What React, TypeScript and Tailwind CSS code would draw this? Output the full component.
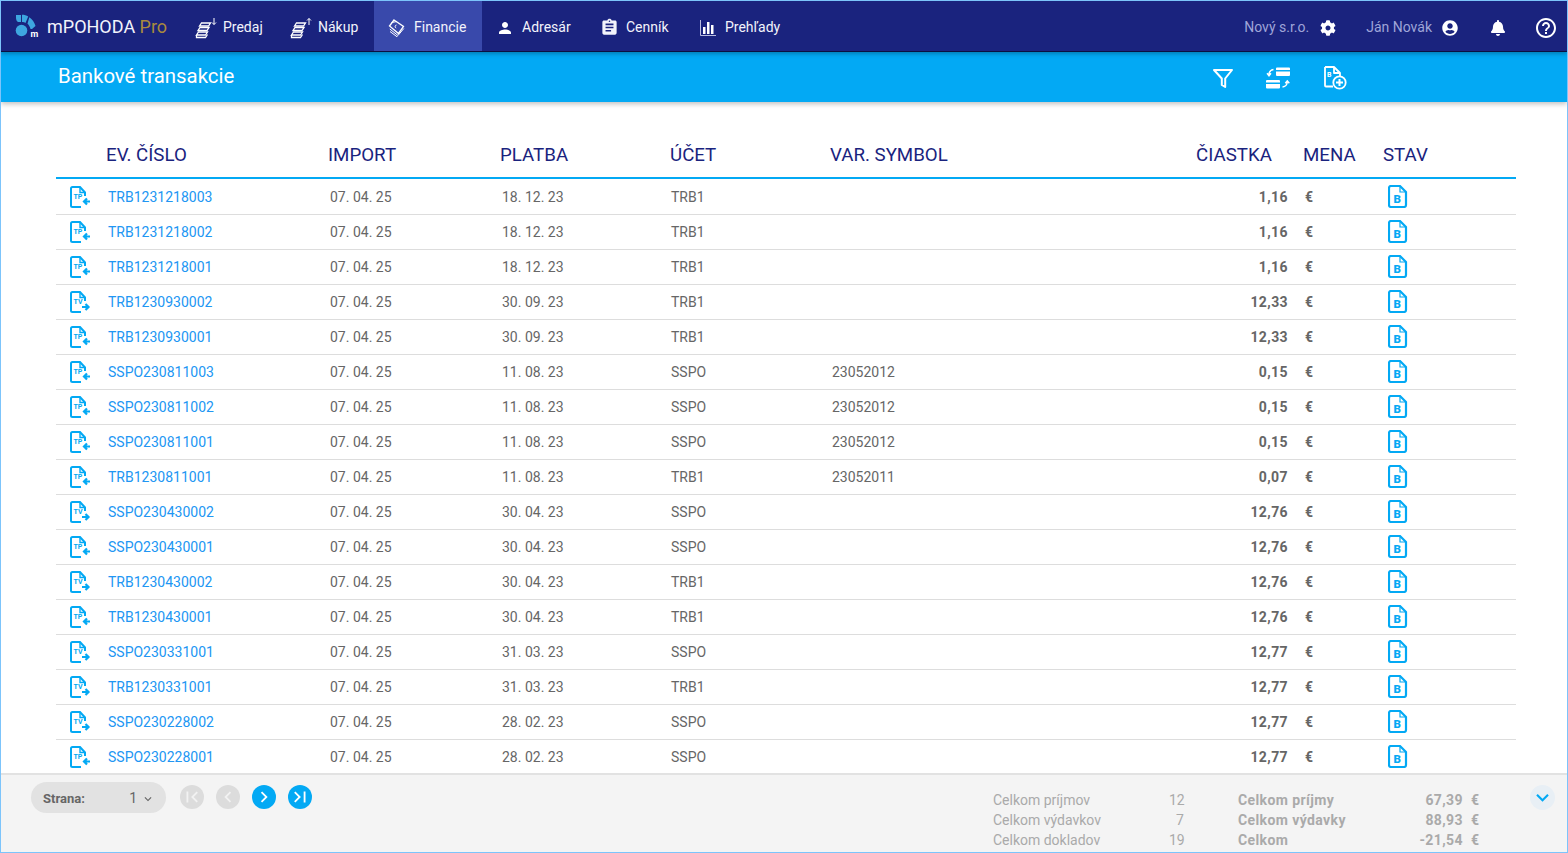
import React from "react";
import { FaCog, FaUserCircle, FaBell } from "react-icons/fa";
import { MdPerson, MdAssignment, MdHelpOutline, MdKeyboardArrowDown, MdChevronRight, MdChevronLeft, MdFirstPage, MdLastPage } from "react-icons/md";

type Row = [string, string, string, string, string, string];
const rows: Row[] = [
  ["TP", "TRB1231218003", "18. 12. 23", "TRB1", "", "1,16"],
  ["TP", "TRB1231218002", "18. 12. 23", "TRB1", "", "1,16"],
  ["TP", "TRB1231218001", "18. 12. 23", "TRB1", "", "1,16"],
  ["TV", "TRB1230930002", "30. 09. 23", "TRB1", "", "12,33"],
  ["TP", "TRB1230930001", "30. 09. 23", "TRB1", "", "12,33"],
  ["TP", "SSPO230811003", "11. 08. 23", "SSPO", "23052012", "0,15"],
  ["TP", "SSPO230811002", "11. 08. 23", "SSPO", "23052012", "0,15"],
  ["TP", "SSPO230811001", "11. 08. 23", "SSPO", "23052012", "0,15"],
  ["TP", "TRB1230811001", "11. 08. 23", "TRB1", "23052011", "0,07"],
  ["TV", "SSPO230430002", "30. 04. 23", "SSPO", "", "12,76"],
  ["TP", "SSPO230430001", "30. 04. 23", "SSPO", "", "12,76"],
  ["TV", "TRB1230430002", "30. 04. 23", "TRB1", "", "12,76"],
  ["TP", "TRB1230430001", "30. 04. 23", "TRB1", "", "12,76"],
  ["TV", "SSPO230331001", "31. 03. 23", "SSPO", "", "12,77"],
  ["TV", "TRB1230331001", "31. 03. 23", "TRB1", "", "12,77"],
  ["TV", "SSPO230228002", "28. 02. 23", "SSPO", "", "12,77"],
  ["TP", "SSPO230228001", "28. 02. 23", "SSPO", "", "12,77"],
];

const Logo = () => (
  <svg width="25" height="24" viewBox="0 0 25 24" className="shrink-0">
    <circle cx="6.500" cy="16.500" r="5.800" fill="#3ea6e0" />
    <path d="M1 1h5v7H3C1.500 7 1 5.500 1 4z" fill="#3ea6e0" />
    <path d="M7 .8c2.500 0 4.500.6 6.200 1.700L10.500 9C9.500 8.300 8.500 8 7 8z" fill="#3ea6e0" />
    <path d="M14.300 3.200c3 2 5.300 5.200 6.200 8.700l-3.500 3.100h-1.500c-.5-2-1.500-3.800-3-5.200z" fill="#3ea6e0" />
    <text x="15.500" y="22.500" fontSize="9" fontWeight="700" fill="#fff" fontFamily="Roboto, sans-serif">m</text>
  </svg>
);

const Coins = ({ up }: { up?: boolean }) => (
  <svg width="22" height="22" viewBox="0 0 22 22" fill="none" stroke="#fff" strokeWidth="1.300" className="shrink-0">
    <path d="M4.500 9 6.500 6h9l-2 3z" />
    <path d="M3 13.500 5 10.500h9l-2 3z" />
    <path d="M1.500 18 3.500 15h9l-2 3z" />
    <path d="M1.500 18v2.500h9l2-3" />
    {up ? <path d="M19 8V1.500M17 3.500l2-2 2 2" strokeWidth="1" /> : <path d="M19 1v6.500M17 5.500l2 2 2-2" strokeWidth="1" />}
  </svg>
);

const Bank = () => (
  <svg width="18" height="18" viewBox="0 0 18 18" fill="none" stroke="#fff" strokeWidth="1.300" className="shrink-0">
    <path d="M6 1 15.500 7.500 10.500 14.500 1.500 7z" />
    <path d="M3.500 3.500 9 2.500M8.500 6c-1.500 0-2 2.500-.300 3" strokeWidth="1" />
    <path d="M1.800 10 10 16.500l5.800-7M2 12.500l8 6" strokeWidth="1" />
  </svg>
);

const Bars = () => (
  <svg width="16" height="16" viewBox="0 0 16 16" className="shrink-0">
    <path d="M.5 0v15.500H16" fill="none" stroke="#b9bde0" strokeWidth="1" />
    <rect x="3" y="7" width="2.500" height="7" fill="#fff" />
    <rect x="7" y="2" width="2.500" height="12" fill="#fff" />
    <rect x="11" y="5" width="2.500" height="9" fill="#fff" />
  </svg>
);

const NavItem = ({ icon, label, active, cls, iconCls }: { icon: React.ReactNode; label: string; active?: boolean; cls: string; iconCls: string }) => (
  <div className={`flex h-full items-center pl-[14px] pt-[3px] ${cls} ${active ? "bg-[#3949ab]" : ""}`}>
    <div className={`flex items-center ${iconCls}`}>{icon}</div>
    <span className="text-[14px] text-[#f2f3fb]">{label}</span>
  </div>
);

const Funnel = () => (
  <svg width="22" height="22" viewBox="0 0 22 22" fill="none" stroke="#fff" strokeWidth="2" strokeLinejoin="round">
    <path d="M2 3h18l-6.800 8.500v8.500l-3.400-2v-6.500z" />
  </svg>
);

const Transfer = () => (
  <svg width="26" height="24" viewBox="0 0 26 24" fill="#fff">
    <path d="M11 2.500a1 1 0 0 1 1-1h12a1 1 0 0 1 1 1v1.500H11zM11 5.500h14V9a1 1 0 0 1-1 1H12a1 1 0 0 1-1-1z" />
    <path d="M1 15a1 1 0 0 1 1-1h12a1 1 0 0 1 1 1v1.500H1zM1 18h14v3.500a1 1 0 0 1-1 1H2a1 1 0 0 1-1-1z" />
    <path d="M8.500 3.500C5.500 4 3.800 6 4 9M2 7.300 4 9.800l2-2.500M17.500 21c3 -.3 4.700-2 4.800-5.500M20.300 17.300l2-2.500 2 2.500" fill="none" stroke="#fff" strokeWidth="1.400" />
  </svg>
);

const DocPlus = () => (
  <svg width="24" height="24" viewBox="0 0 24 24" fill="none">
    <path d="M2 1h9l6 6v5M10 20.500H3a1 1 0 0 1-1-1V1M11 1v6h6" stroke="#fff" strokeWidth="1.800" strokeLinejoin="round" />
    <text x="4" y="11" fontSize="7" fontWeight="700" fill="#fff" fontFamily="Roboto, sans-serif">B</text>
    <circle cx="16.500" cy="16.500" r="6.200" stroke="#fff" strokeWidth="1.800" fill="#03a9f4" />
    <path d="M16.500 13v7M13 16.500h7" stroke="#fff" strokeWidth="2" />
  </svg>
);

const DocType = ({ type }: { type: string }) => (
  <svg width="22" height="22" viewBox="0 0 22 22" fill="none" className="shrink-0">
    <path d="M15 10V6.500L10 1H2.500a1.500 1.500 0 0 0-1.500 1.500v17A1.500 1.500 0 0 0 2.500 21H11" stroke="#03a9f4" strokeWidth="2" />
    <path d="M10 1.500V6.500h5" stroke="#03a9f4" strokeWidth="1.400" />
    <text x="3.500" y="12.500" fontSize="7" fontWeight="700" fill="#03a9f4" fontFamily="Roboto, sans-serif">{type}</text>
    {type === "TP" ? (
      <path d="M20 15.500h-6M17 12.500l-3 3 3 3" stroke="#03a9f4" strokeWidth="2.200" />
    ) : (
      <path d="M12 16h6M15.500 13l3 3-3 3" stroke="#03a9f4" strokeWidth="2.200" />
    )}
  </svg>
);

const DocB = () => (
  <svg width="20" height="23" viewBox="0 0 20 23" fill="none" className="mb-[2px] shrink-0">
    <path d="M12 1H3a2 2 0 0 0-2 2v17a2 2 0 0 0 2 2h13a2 2 0 0 0 2-2V7z" stroke="#03a9f4" strokeWidth="2.200" strokeLinejoin="round" />
    <path d="M12 1.500V7h5.500" stroke="#03a9f4" strokeWidth="1.200" />
    <text x="5.500" y="18" fontSize="11.500" fontWeight="900" fill="#03a9f4" fontFamily="Roboto, sans-serif">B</text>
  </svg>
);

const grid = "grid grid-cols-[50px_222px_172px_170px_160px_366px_107px_80px_1fr] items-center";

const PageBtn = ({ children, on }: { children: React.ReactNode; on?: boolean }) => (
  <div className={`flex h-6 w-6 items-center justify-center rounded-full ${on ? "bg-[#03a9f4] text-white" : "bg-[#dcdcdc] text-[#f2f2f2]"}`}>
    {children}
  </div>
);

const Total = ({ a, n, b, v }: { a: string; n: string; b: string; v: string }) => (
  <div className="flex h-5 items-center text-[14px] text-[#aaaaaa]">
    <span className="w-[176px]">{a}</span>
    <span className="w-[15px] text-right">{n}</span>
    <span className="ml-[54px] w-[121px] font-bold tracking-[0.4px]">{b}</span>
    <span className="w-[104px] text-right font-bold tracking-[0.4px]">{v}</span>
    <span className="ml-[8px] font-bold">€</span>
  </div>
);

export default function App() {
  return (
    <div className="flex h-screen w-full flex-col overflow-hidden border border-[#7cc4fb] bg-white font-['Roboto',sans-serif]">
      <header className="z-20 flex h-[51px] shrink-0 items-center border-b border-[#0b1040] bg-[#1a237e] shadow-[0_2px_4px_rgba(0,0,0,0.25)]">
        <div className="flex w-[180px] items-center gap-[7px] pl-[14px]">
          <Logo />
          <span className="whitespace-nowrap text-[18px] text-[#f2f3fb]">mPOHODA <span className="text-[#a98a3d]">Pro</span></span>
        </div>
        <div className="flex h-full items-center">
          <NavItem cls="w-[95px]" iconCls="w-[28px]" icon={<Coins />} label="Predaj" />
          <NavItem cls="w-[98px]" iconCls="w-[28px]" icon={<Coins up />} label="Nákup" />
          <NavItem cls="w-[108px]" iconCls="w-[26px]" active icon={<Bank />} label="Financie" />
          <NavItem cls="w-[104px]" iconCls="w-[26px]" icon={<MdPerson size={18} color="#fff" />} label="Adresár" />
          <NavItem cls="w-[100px]" iconCls="w-[26px]" icon={<MdAssignment size={19} color="#f2f3fb" />} label="Cenník" />
          <NavItem cls="" iconCls="w-[25px]" icon={<Bars />} label="Prehľady" />
        </div>
        <div className="ml-auto flex items-center pt-[3px] text-[14px] text-[#9fa5d8]">
          <span>Nový s.r.o.</span>
          <FaCog size={16} color="#fff" className="ml-[11px]" />
          <span className="ml-[30px]">Ján Novák</span>
          <FaUserCircle size={16} color="#fff" className="ml-[10px]" />
          <FaBell size={16} color="#fff" className="ml-[32px]" />
          <MdHelpOutline size={24} color="#fff" className="ml-[28px] mr-[9px]" />
        </div>
      </header>
      <div className="z-10 flex h-[50px] shrink-0 items-center bg-[#03a9f4] pl-[57px] shadow-[0_2px_5px_rgba(0,0,0,0.25)]">
        <h1 className="mb-[2px] text-[20.4px] font-normal text-white">Bankové transakcie</h1>
        <div className="ml-auto mr-[220px] mt-[1px] flex items-center">
          <Funnel />
          <div className="ml-[31px]"><Transfer /></div>
          <div className="ml-[32px]"><DocPlus /></div>
        </div>
      </div>
      <main className="min-h-0 flex-1 overflow-hidden pl-[55px] pr-[51px] pt-[29px]">
        <div className={`${grid} mb-[1px] h-[48px] border-b-2 border-[#03a9f4] pt-[3px] text-[18.72px] text-[#1a237e]`}>
          <span />
          <span>EV. ČÍSLO</span>
          <span>IMPORT</span>
          <span>PLATBA</span>
          <span>ÚČET</span>
          <span>VAR. SYMBOL</span>
          <span>ČIASTKA</span>
          <span>MENA</span>
          <span>STAV</span>
        </div>
        {rows.map((r) => (
          <div key={r[1]} className={`${grid} h-[35px] border-b border-[#dddddd] text-[14px] text-[#666666]`}>
            <div className="pl-[14px]"><DocType type={r[0]} /></div>
            <span className="pl-[2px] text-[#2196f3]">{r[1]}</span>
            <span className="pl-[2px]">07. 04. 25</span>
            <span className="pl-[2px]">{r[2]}</span>
            <span className="pl-[1px]">{r[3]}</span>
            <span className="pl-[2px]">{r[4]}</span>
            <span className="pr-[15px] text-right font-bold tracking-[0.4px]">{r[5]}</span>
            <span className="pl-[2px] font-bold">€</span>
            <div className="pl-[5px]"><DocB /></div>
          </div>
        ))}
      </main>
      <footer className="z-10 flex h-[79px] shrink-0 border-t-2 border-[#e2e2e2] bg-[#f4f4f4]">
        <div className="ml-[30px] mt-[7px] flex items-start">
          <div className="flex h-[31px] w-[135px] items-center rounded-full bg-[#e2e2e2] pl-3 pr-[11px] pt-[2px] text-[13px] text-[#666666]">
            <span className="font-bold">Strana:</span>
            <span className="ml-auto text-[14px]">1</span>
            <MdKeyboardArrowDown size={14} className="ml-[4px]" />
          </div>
          <div className="ml-[14px] mt-[3px] flex gap-3">
            <PageBtn><MdFirstPage size={22} /></PageBtn>
            <PageBtn><MdChevronLeft size={22} /></PageBtn>
            <PageBtn on><MdChevronRight size={22} /></PageBtn>
            <PageBtn on><MdLastPage size={22} /></PageBtn>
          </div>
        </div>
        <div className="ml-auto pt-[15px]">
          <Total a="Celkom príjmov" n="12" b="Celkom príjmy" v="67,39" />
          <Total a="Celkom výdavkov" n="7" b="Celkom výdavky" v="88,93" />
          <Total a="Celkom dokladov" n="19" b="Celkom" v="-21,54" />
        </div>
        <div className="ml-[51px] mr-[12px] mt-[10px] flex h-[25px] w-[25px] items-center justify-center rounded-full bg-[#e8eff5] text-[#03a9f4]">
          <MdKeyboardArrowDown size={25} />
        </div>
      </footer>
    </div>
  );
}
